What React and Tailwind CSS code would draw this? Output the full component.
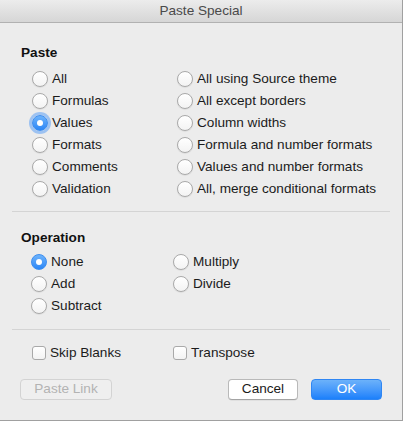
import React from "react";

function Radio({ label, checked, focus }) {
  return (
    <div className="flex items-center h-[22px]">
      <span
        className={
          "relative flex items-center justify-center w-[16px] h-[16px] rounded-full shrink-0 " +
          (checked
            ? "bg-gradient-to-b from-[#6db3fb] to-[#2a86f6] border border-[#3d8ef0] "
            : "bg-gradient-to-b from-[#ffffff] to-[#f3f3f3] border border-[#a9a9a9] shadow-[0_0.5px_1px_rgba(0,0,0,0.12)] ") +
          (focus ? "shadow-[0_0_0_3px_rgba(92,160,246,0.55)]" : "")
        }
      >
        {checked && <span className="w-[6px] h-[6px] rounded-full bg-white" />}
      </span>
      <span className="ml-[4px] text-[13.6px] text-[#1b1b1b] whitespace-nowrap">{label}</span>
    </div>
  );
}

function Check({ label }) {
  return (
    <div className="flex items-center h-[22px]">
      <span className="w-[14px] h-[14px] rounded-[3px] bg-gradient-to-b from-[#ffffff] to-[#f3f3f3] border border-[#a9a9a9] shrink-0" />
      <span className="ml-[4px] text-[13.6px] text-[#1b1b1b] whitespace-nowrap">{label}</span>
    </div>
  );
}

export default function App() {
  return (
    <div
      className="w-[403px] h-[421px] bg-[#ececec] border-r border-b border-[#a0a0a0] flex flex-col overflow-hidden"
      style={{ fontFamily: '"Liberation Sans", Arial, sans-serif' }}
    >
      <div className="h-[23px] shrink-0 bg-gradient-to-b from-[#ececec] to-[#d6d6d6] border-b border-[#b1b1b1] flex items-center justify-center">
        <span className="text-[13.6px] text-[#4a4a4a] mt-[1px]">Paste Special</span>
      </div>

      <div className="pl-[21px] mt-[22px] text-[13.6px] font-bold text-[#111] leading-[16px]">Paste</div>

      <div className="flex mt-[7px]">
        <div className="pl-[32px] w-[177px] flex flex-col">
          <Radio label="All" />
          <Radio label="Formulas" />
          <Radio label="Values" checked focus />
          <Radio label="Formats" />
          <Radio label="Comments" />
          <Radio label="Validation" />
        </div>
        <div className="flex flex-col">
          <Radio label="All using Source theme" />
          <Radio label="All except borders" />
          <Radio label="Column widths" />
          <Radio label="Formula and number formats" />
          <Radio label="Values and number formats" />
          <Radio label="All, merge conditional formats" />
        </div>
      </div>

      <div className="mt-[11px] ml-[12px] w-[378px] h-px bg-[#d4d4d4]" />

      <div className="pl-[21px] mt-[18px] text-[13.6px] font-bold text-[#111] leading-[16px]">Operation</div>

      <div className="flex mt-[5px]">
        <div className="pl-[31px] w-[173px] flex flex-col">
          <Radio label="None" checked />
          <Radio label="Add" />
          <Radio label="Subtract" />
        </div>
        <div className="flex flex-col">
          <Radio label="Multiply" />
          <Radio label="Divide" />
        </div>
      </div>

      <div className="mt-[12px] ml-[12px] w-[378px] h-px bg-[#d4d4d4]" />

      <div className="flex mt-[12px]">
        <div className="pl-[32px] w-[173px]">
          <Check label="Skip Blanks" />
        </div>
        <Check label="Transpose" />
      </div>

      <div className="flex items-center mt-[15px] pl-[20px]">
        <div className="w-[92px] h-[21px] rounded-[4px] border border-[#d3d3d3] bg-[#efefef] flex items-center justify-center text-[13.6px] text-[#b3b3b3]">
          Paste Link
        </div>
        <div className="ml-[116px] w-[70px] h-[21px] rounded-[4px] border border-[#b9b9b9] border-b-[#a4a4a4] bg-white flex items-center justify-center text-[13.6px] text-[#1b1b1b] shadow-[0_0.5px_0.5px_rgba(0,0,0,0.1)]">
          Cancel
        </div>
        <div className="ml-[13px] w-[71px] h-[21px] rounded-[4px] border border-[#2f86f3] bg-gradient-to-b from-[#6cb2fa] to-[#1a80fb] flex items-center justify-center text-[13.6px] text-white">
          OK
        </div>
      </div>
    </div>
  );
}
